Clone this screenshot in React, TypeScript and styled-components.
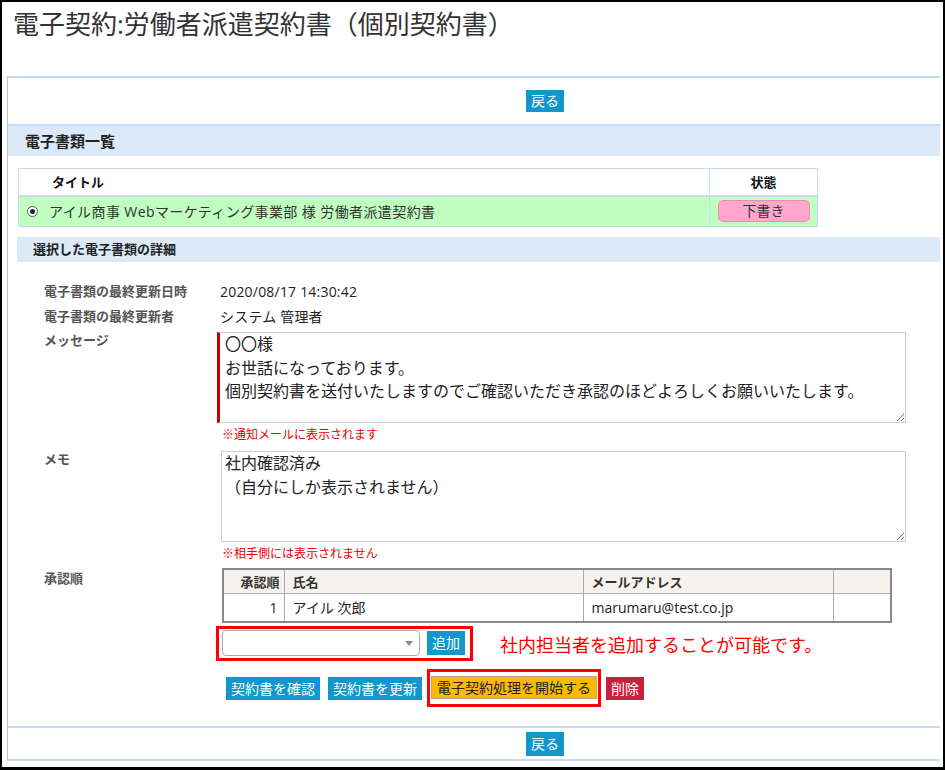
import React from "react";
import styled, { createGlobalStyle } from "styled-components";

const GlobalStyle = createGlobalStyle`
  html, body {
    margin: 0;
    padding: 0;
    overflow: hidden;
    background: #fff;
  }
  body {
    font-family: "Open Sans", "Noto Sans CJK JP", sans-serif;
    color: #333;
  }
  * {
    box-sizing: border-box;
  }
`;

type Approver = { order: number; name: string; email: string };

const approvers: Approver[] = [
  { order: 1, name: "アイル 次郎", email: "marumaru@test.co.jp" },
];

const MESSAGE =
  "〇〇様\nお世話になっております。\n個別契約書を送付いたしますのでご確認いただき承認のほどよろしくお願いいたします。";
const MEMO = "社内確認済み\n（自分にしか表示されません）";

const App = () => {
  return (
    <Page>
      <GlobalStyle />
      <Title>電子契約:労働者派遣契約書（個別契約書）</Title>

      <Panel>
        <BackBar $position="top">
          <Button>戻る</Button>
        </BackBar>

        <SectionHeader>電子書類一覧</SectionHeader>

        <DocTable>
          <thead>
            <tr>
              <TitleHead>タイトル</TitleHead>
              <StatusHead>状態</StatusHead>
            </tr>
          </thead>
          <tbody>
            <tr>
              <DocCell>
                <DocLabel>
                  <Radio />
                  アイル商事 Webマーケティング事業部 様 労働者派遣契約書
                </DocLabel>
              </DocCell>
              <StatusCell>
                <StatusBadge>下書き</StatusBadge>
              </StatusCell>
            </tr>
          </tbody>
        </DocTable>

        <SubHeader>選択した電子書類の詳細</SubHeader>

        <Details>
          <InfoRow>
            <Label>電子書類の最終更新日時</Label>
            <Value>2020/08/17 14:30:42</Value>
          </InfoRow>
          <InfoRow>
            <Label>電子書類の最終更新者</Label>
            <Value>システム 管理者</Value>
          </InfoRow>

          <FieldRow $first>
            <FieldLabel>メッセージ</FieldLabel>
            <FieldValue>
              <TextArea $required readOnly value={MESSAGE} />
              <Note>※通知メールに表示されます</Note>
            </FieldValue>
          </FieldRow>

          <FieldRow>
            <FieldLabel>メモ</FieldLabel>
            <FieldValue>
              <TextArea readOnly value={MEMO} />
              <Note>※相手側には表示されません</Note>
            </FieldValue>
          </FieldRow>

          <FieldRow>
            <FieldLabel>承認順</FieldLabel>
            <FieldValue>
              <ApproverTable>
                <thead>
                  <tr>
                    <OrderHead>承認順</OrderHead>
                    <NameHead>氏名</NameHead>
                    <MailHead>メールアドレス</MailHead>
                    <EmptyHead />
                  </tr>
                </thead>
                <tbody>
                  {approvers.map(a => (
                    <tr key={a.order}>
                      <OrderCell>{a.order}</OrderCell>
                      <TextCell>{a.name}</TextCell>
                      <TextCell>{a.email}</TextCell>
                      <TextCell />
                    </tr>
                  ))}
                </tbody>
              </ApproverTable>

              <AddRow>
                <AddBox>
                  <Select>
                    <SelectArrow />
                  </Select>
                  <Button $height={24}>追加</Button>
                </AddBox>
                <Hint>社内担当者を追加することが可能です。</Hint>
              </AddRow>

              <ActionRow>
                <Button $height={23}>契約書を確認</Button>
                <Button $height={23}>契約書を更新</Button>
                <Highlight>
                  <StartButton>電子契約処理を開始する</StartButton>
                </Highlight>
                <Button $height={23} $danger>
                  削除
                </Button>
              </ActionRow>
            </FieldValue>
          </FieldRow>
        </Details>

        <BackBar $position="bottom">
          <Button $height={24}>戻る</Button>
        </BackBar>
      </Panel>
    </Page>
  );
};

const Page = styled.div`
  width: 945px;
  height: 770px;
  border: 2px solid #000;
  border-bottom-width: 3px;
  display: flex;
  flex-direction: column;
`;

const Title = styled.h1`
  margin: 4px 0 34px 11px;
  font-size: 26px;
  line-height: 36px;
  font-weight: normal;
  color: #333;
  white-space: nowrap;
`;

const Panel = styled.div`
  margin: 0 3px 0 5px;
  border-top: 2px solid #c6dcf5;
  border-bottom: 2px solid #c6dcf5;
  border-left: 1px solid #b9c3cc;
`;

/* the back buttons sit right of the panel's middle */
const BackBar = styled.div<{ $position: "top" | "bottom" }>`
  display: flex;
  justify-content: center;
  align-items: center;
  padding-left: 142px;
  height: ${p => (p.$position === "top" ? 48 : 33)}px;
  border-${p => (p.$position === "top" ? "bottom" : "top")}: 2px solid #c6dcf5;
`;

const Button = styled.button<{ $height?: number; $danger?: boolean }>`
  font-family: inherit;
  font-size: 14px;
  height: ${p => p.$height ?? 22}px;
  line-height: ${p => p.$height ?? 22}px;
  padding: 0 5px;
  border: none;
  border-radius: 0;
  color: #fff;
  background: ${p => (p.$danger ? "#c9213c" : "#1397cb")};
  white-space: nowrap;
  cursor: pointer;
`;

const SectionHeader = styled.h2`
  margin: 0;
  height: 30px;
  line-height: 30px;
  padding-left: 17px;
  background: #dbe9f8;
  font-size: 15px;
  font-weight: bold;
  color: #222;
`;

const DocTable = styled.table`
  border-collapse: collapse;
  width: 800px;
  margin: 12px 0 0 10px;
  font-size: 14px;

  th,
  td {
    border: 1px solid #c6dcf3;
    padding: 0;
  }
  thead th {
    border-bottom: 2px solid #c6dcf3;
  }
`;

const TitleHead = styled.th`
  height: 27px;
  text-align: left;
  padding-left: 33px !important;
  font-size: 13px;
  font-weight: bold;
  color: #111;
`;

const StatusHead = styled.th`
  width: 108px;
  font-size: 13px;
  font-weight: bold;
  color: #111;
`;

const DocCell = styled.td`
  height: 31px;
  background: #c0ffc0;
`;

const DocLabel = styled.div`
  display: flex;
  align-items: center;
  padding-left: 8px;
  color: #333;
  letter-spacing: 0.4px;
  white-space: nowrap;
`;

const Radio = styled.span`
  width: 11px;
  height: 11px;
  margin-right: 11px;
  border: 1px solid #555;
  border-radius: 50%;
  display: flex;
  align-items: center;
  justify-content: center;
  background: #fff;

  &::after {
    content: "";
    width: 5px;
    height: 5px;
    border-radius: 50%;
    background: #222;
  }
`;

const StatusCell = styled.td`
  background: #c0ffc0;
  text-align: center;
`;

const StatusBadge = styled.span`
  display: inline-block;
  width: 92px;
  height: 22px;
  line-height: 20px;
  border: 1px solid #ec8cb6;
  border-radius: 5px;
  background: #ffa8cc;
  font-size: 14px;
  color: #333;
  vertical-align: middle;
`;

const SubHeader = styled.h3`
  margin: 10px 0 0 9px;
  height: 25px;
  line-height: 25px;
  padding-left: 16px;
  background: #dbe9f8;
  font-size: 13px;
  font-weight: bold;
  color: #222;
`;

const Details = styled.div`
  padding: 17px 34px 19px 36px;
`;

const InfoRow = styled.div`
  display: flex;
  line-height: 25px;
  height: 25px;
`;

const Label = styled.div`
  width: 176px;
  flex: none;
  font-size: 13px;
  font-weight: bold;
  color: #555;
`;

const Value = styled.div`
  font-size: 14px;
  color: #222;
  letter-spacing: 0.2px;
`;

const FieldRow = styled.div<{ $first?: boolean }>`
  display: flex;
  align-items: flex-start;
  margin-top: ${p => (p.$first ? 3 : 0)}px;
`;

const FieldLabel = styled(Label)`
  line-height: 16px;
`;

const FieldValue = styled.div`
  flex: 1;
  min-width: 0;
`;

const TextArea = styled.textarea<{ $required?: boolean }>`
  display: block;
  width: ${p => (p.$required ? "calc(100% + 3px)" : "calc(100% - 1px)")};
  margin-left: ${p => (p.$required ? -3 : 1)}px;
  height: 91px;
  padding: 0 4px 0 ${p => (p.$required ? 5 : 3)}px;
  border: 1px solid #ccc;
  border-left: ${p => (p.$required ? "3px solid #c40000" : "1px solid #ccc")};
  font-family: inherit;
  font-size: 16px;
  line-height: 23.5px;
  color: #222;
  background: #fff;
  outline: none;
  overflow: hidden;
`;

const Note = styled.div`
  margin: 3px 0 7px 2px;
  font-size: 12px;
  line-height: 18px;
  color: #e80000;
`;

const ApproverTable = styled.table`
  border-collapse: collapse;
  width: 670px;
  margin: -2px 0 0 2px;
  border: 2px solid #888;

  th,
  td {
    border: 1px solid #aaa;
    padding: 0 8px;
  }
`;

const HeadCell = styled.th`
  height: 24px;
  background: #f6f3ee;
  font-size: 13px;
  font-weight: bold;
  color: #333;
  text-align: left;
`;

const OrderHead = styled(HeadCell)`
  width: 61px;
  text-align: right;
  padding-right: 4px !important;
`;

const NameHead = styled(HeadCell)`
  width: 299px;
`;

const MailHead = styled(HeadCell)`
  width: 250px;
`;

const EmptyHead = styled(HeadCell)``;

const TextCell = styled.td`
  height: 29px;
  font-size: 14px;
  color: #222;
`;

const OrderCell = styled(TextCell)`
  text-align: right;
  padding-right: 6px !important;
`;

const AddRow = styled.div`
  display: flex;
  align-items: center;
  margin: 3px 0 0 -4px;
`;

const AddBox = styled.div`
  display: flex;
  align-items: center;
  gap: 7px;
  padding: 1px 5px 2px 3px;
  border: 3px solid #f00;
`;

const Select = styled.div`
  width: 198px;
  height: 26px;
  border: 1px solid #aaa;
  border-radius: 4px;
  background: #fff;
  display: flex;
  align-items: center;
  justify-content: flex-end;
  padding-right: 6px;
`;

const SelectArrow = styled.span`
  width: 0;
  height: 0;
  border-left: 4px solid transparent;
  border-right: 4px solid transparent;
  border-top: 5px solid #888;
`;

const Hint = styled.div`
  margin-left: 27px;
  font-size: 18px;
  color: #f00;
  white-space: nowrap;
`;

const ActionRow = styled.div`
  display: flex;
  align-items: center;
  gap: 5px;
  margin: 8px 0 0 6px;

  & > button:first-child {
    margin-right: 3px;
  }
`;

const Highlight = styled.div`
  display: flex;
  padding: 4px 1px 5px;
  border: 3px solid #f00;
`;

const StartButton = styled.button`
  font-family: inherit;
  font-size: 14px;
  height: 23px;
  line-height: 21px;
  padding: 0 5px;
  border: 1px solid #b5a68a;
  border-radius: 0;
  background: #fbb900;
  color: #222;
  white-space: nowrap;
  cursor: pointer;
`;

export default App;
